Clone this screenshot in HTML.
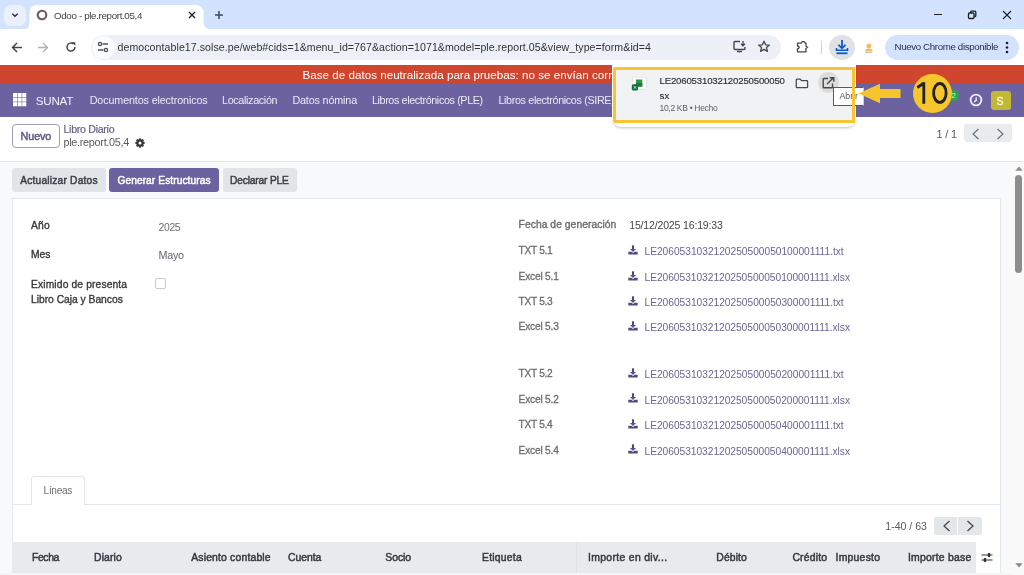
<!DOCTYPE html>
<html><head><meta charset="utf-8"><style>
html,body{margin:0;padding:0;width:1024px;height:575px;overflow:hidden;background:#fff;font-family:"Liberation Sans", sans-serif;}
body{filter:blur(0.35px);}
.t{position:absolute;white-space:pre;}
.r{position:absolute;}
</style></head><body>
<div class="r" style="left:0px;top:0px;width:1024px;height:29px;background:#d3e3fd"></div>
<div class="r" style="left:4px;top:4.5px;width:22px;height:21.5px;background:#eaf1fd;border-radius:7px"></div>
<svg class="r" style="left:10px;top:12px" width="10" height="7" viewBox="0 0 10 7"><path d="M2.3 1.8 L5 4.3 L7.7 1.8" stroke="#2a2f3a" stroke-width="1.5" fill="none"/></svg>
<svg class="r" style="left:21px;top:5px" width="192" height="25" viewBox="0 0 192 25"><path d="M0 25 Q8.5 25 8.5 17 L8.5 8 Q8.5 0 16.5 0 L174.5 0 Q182.5 0 182.5 8 L182.5 17 Q182.5 25 192 25 Z" fill="#ffffff"/></svg>
<svg class="r" style="left:35.7px;top:9px" width="12" height="12" viewBox="0 0 12 12"><circle cx="6" cy="6" r="4.3" stroke="#6b5862" stroke-width="2.1" fill="none"/></svg>
<div class="t" style="left:54px;top:10.60px;font-size:9.8px;line-height:9.8px;color:#3f3f3f;letter-spacing:-0.357px;">Odoo - ple.report.05,4</div>
<svg class="r" style="left:188px;top:11px" width="8" height="8" viewBox="0 0 8 8"><path d="M1 1L7 7M7 1L1 7" stroke="#1f1f1f" stroke-width="1.4"/></svg>
<svg class="r" style="left:214px;top:10px" width="10" height="10" viewBox="0 0 10 10"><path d="M5 1V9M1 5H9" stroke="#3c4a5c" stroke-width="1.5"/></svg>
<div class="r" style="left:934px;top:13.8px;width:7.5px;height:1.3px;background:#1f1f1f"></div>
<svg class="r" style="left:967px;top:10px" width="10" height="10" viewBox="0 0 10 10"><rect x="1.5" y="3" width="5.5" height="5.5" rx="1" stroke="#1f1f1f" stroke-width="1.3" fill="none"/><path d="M3.5 3V2.2Q3.5 1.2 4.5 1.2H7.8Q8.8 1.2 8.8 2.2V5.5Q8.8 6.5 7.8 6.5H7" stroke="#1f1f1f" stroke-width="1.3" fill="none"/></svg>
<svg class="r" style="left:1002px;top:10px" width="10" height="10" viewBox="0 0 10 10"><path d="M1 1L9 9M9 1L1 9" stroke="#1f1f1f" stroke-width="1.1"/></svg>
<div class="r" style="left:0px;top:29px;width:1024px;height:36px;background:#ffffff"></div>
<svg class="r" style="left:11px;top:42px" width="12" height="11" viewBox="0 0 12 11"><path d="M11 5.5H2M6 1L1.5 5.5L6 10" stroke="#474747" stroke-width="1.5" fill="none"/></svg>
<svg class="r" style="left:37px;top:42px" width="12" height="11" viewBox="0 0 12 11"><path d="M1 5.5H10M6 1L10.5 5.5L6 10" stroke="#b0b0b0" stroke-width="1.3" fill="none"/></svg>
<svg class="r" style="left:65px;top:41px" width="12" height="12" viewBox="0 0 12 12"><path d="M10 6A4 4 0 1 1 8.6 3" stroke="#474747" stroke-width="1.5" fill="none"/><path d="M6.8 1.3H10.3V4.8Z" fill="#474747"/></svg>
<div class="r" style="left:91px;top:34.5px;width:690px;height:25.8px;background:#edf1f7;border-radius:13px"></div>
<div class="r" style="left:92px;top:36px;width:23px;height:23px;background:#fafbfd;border-radius:12px"></div>
<svg class="r" style="left:97px;top:41px" width="12" height="12" viewBox="0 0 12 12"><circle cx="3" cy="3" r="1.6" stroke="#474747" stroke-width="1.2" fill="none"/><path d="M5.5 3H11" stroke="#474747" stroke-width="1.4"/><circle cx="9" cy="9" r="1.6" stroke="#474747" stroke-width="1.2" fill="none"/><path d="M1 9H6.5" stroke="#474747" stroke-width="1.4"/></svg>
<div class="t" style="left:117.5px;top:41.83px;font-size:10.6px;line-height:10.6px;color:#333333;letter-spacing:0.065px;">democontable17.solse.pe/web#cids=1&amp;menu_id=767&amp;action=1071&amp;model=ple.report.05&amp;view_type=form&amp;id=4</div>
<svg class="r" style="left:733px;top:40px" width="14" height="13" viewBox="0 0 14 13"><path d="M7 1.5H2Q1 1.5 1 2.5V8.5Q1 9.5 2 9.5H11Q12 9.5 12 8.5V7" stroke="#474747" stroke-width="1.4" fill="none"/><path d="M4 11.5H9" stroke="#474747" stroke-width="1.5"/><path d="M10 1V5.5M8 3.8L10 5.8L12 3.8" stroke="#474747" stroke-width="1.3" fill="none"/></svg>
<svg class="r" style="left:757px;top:40px" width="14" height="13" viewBox="0 0 14 13"><path d="M7 1.2L8.6 4.8L12.4 5.1L9.5 7.6L10.4 11.4L7 9.4L3.6 11.4L4.5 7.6L1.6 5.1L5.4 4.8Z" stroke="#474747" stroke-width="1.3" fill="none" stroke-linejoin="round"/></svg>
<svg class="r" style="left:795px;top:40px" width="14" height="14" viewBox="0 0 14 14"><path d="M2.5 3.2H6.2L7.2 1.6H9.2L10.2 3.2H11V6.3L12.6 7.3L11 8.3V11.8H2.5V8.6Q4.2 8.6 4.2 7.3Q4.2 6 2.5 6Z" stroke="#474747" stroke-width="1.3" fill="none" stroke-linejoin="round"/></svg>
<div class="r" style="left:821px;top:41px;width:1px;height:13px;background:#d0d4da"></div>
<div class="r" style="left:829px;top:35px;width:26px;height:25px;background:#dfe1e4;border-radius:13px"></div>
<svg class="r" style="left:835px;top:39px" width="14" height="17" viewBox="0 0 14 17"><path d="M7 1V9M3.5 5.8L7 9.3L10.5 5.8" stroke="#0b57d0" stroke-width="1.8" fill="none"/><path d="M1.5 9V11.3H12.5V9" stroke="#0b57d0" stroke-width="1.6" fill="none"/><path d="M1.5 14.3H12.5" stroke="#0b57d0" stroke-width="1.8"/></svg>
<svg class="r" style="left:864px;top:43px" width="10" height="10" viewBox="0 0 10 10"><circle cx="4.8" cy="3" r="2.4" fill="#f7b85e"/><path d="M1 8.2Q1 5.6 4.8 5.6Q8.6 5.6 8.6 8.2Z" fill="#f7b85e"/><path d="M1.2 9.4H8.4" stroke="#b9a88c" stroke-width="0.9"/></svg>
<div class="r" style="left:885px;top:35px;width:134px;height:25px;background:#d3e3fd;border-radius:13px"></div>
<div class="t" style="left:894.5px;top:41.79px;font-size:9.7px;line-height:9.7px;color:#1f2a44;letter-spacing:-0.346px;">Nuevo Chrome disponible</div>
<svg class="r" style="left:1005px;top:41px" width="4" height="13" viewBox="0 0 4 13"><circle cx="2" cy="2" r="1.3" fill="#1f1f1f"/><circle cx="2" cy="6.5" r="1.3" fill="#1f1f1f"/><circle cx="2" cy="11" r="1.3" fill="#1f1f1f"/></svg>
<div class="r" style="left:0px;top:65px;width:1024px;height:18.2px;background:#d0452e"></div>
<div class="t" style="left:302.5px;top:68.78px;font-size:11.6px;line-height:11.6px;color:#ffffff;letter-spacing:0.025px;">Base de datos neutralizada para pruebas: no se envían corr</div>
<div class="r" style="left:0px;top:83.2px;width:1024px;height:33.8px;background:#6d62a0"></div>
<svg class="r" style="left:13.2px;top:93.2px" width="15" height="15" viewBox="0 0 15 15"><rect x="0.0" y="0.0" width="4.05" height="4.05" fill="#ffffff"/><rect x="0.0" y="4.6" width="4.05" height="4.05" fill="#ffffff"/><rect x="0.0" y="9.2" width="4.05" height="4.05" fill="#ffffff"/><rect x="4.6" y="0.0" width="4.05" height="4.05" fill="#ffffff"/><rect x="4.6" y="4.6" width="4.05" height="4.05" fill="#ffffff"/><rect x="4.6" y="9.2" width="4.05" height="4.05" fill="#ffffff"/><rect x="9.2" y="0.0" width="4.05" height="4.05" fill="#ffffff"/><rect x="9.2" y="4.6" width="4.05" height="4.05" fill="#ffffff"/><rect x="9.2" y="9.2" width="4.05" height="4.05" fill="#ffffff"/></svg>
<div class="t" style="left:35.8px;top:95.08px;font-size:11.6px;line-height:11.6px;color:#f4f2fa;letter-spacing:-0.247px;">SUNAT</div>
<div class="t" style="left:89.7px;top:94.86px;font-size:10.8px;line-height:10.8px;color:#ebe8f5;letter-spacing:-0.149px;">Documentos electronicos</div>
<div class="t" style="left:222px;top:94.86px;font-size:10.8px;line-height:10.8px;color:#ebe8f5;letter-spacing:-0.352px;">Localización</div>
<div class="t" style="left:292.4px;top:94.86px;font-size:10.8px;line-height:10.8px;color:#ebe8f5;letter-spacing:-0.169px;">Datos nómina</div>
<div class="t" style="left:371.9px;top:94.86px;font-size:10.8px;line-height:10.8px;color:#ebe8f5;letter-spacing:-0.389px;">Libros electrónicos (PLE)</div>
<div class="t" style="left:498.4px;top:94.86px;font-size:10.8px;line-height:10.8px;color:#ebe8f5;letter-spacing:-0.362px;">Libros electrónicos (SIRE)</div>
<div class="r" style="left:0px;top:117px;width:1024px;height:44px;background:#ffffff"></div>
<div class="r" style="left:0px;top:161px;width:1024px;height:1px;background:#e2e5e9"></div>
<div class="r" style="left:12px;top:123.5px;width:48px;height:24.5px;background:#fff;border:1px solid #a29eb0;border-radius:4px;box-sizing:border-box"></div>
<div class="t" style="left:20.5px;top:131.16px;font-size:10.8px;line-height:10.8px;color:#5d5a80;-webkit-text-stroke:0.46px #5d5a80;letter-spacing:-0.084px;">Nuevo</div>
<div class="t" style="left:63.5px;top:124.43px;font-size:10.6px;line-height:10.6px;color:#66628a;-webkit-text-stroke:0.20px #66628a;letter-spacing:-0.281px;">Libro Diario</div>
<div class="t" style="left:63.5px;top:136.96px;font-size:10.8px;line-height:10.8px;color:#5a5a5a;letter-spacing:-0.276px;">ple.report.05,4</div>
<svg class="r" style="left:135.2px;top:137.5px" width="10" height="10" viewBox="0 0 10 10"><g fill="#3a3a3a"><circle cx="5" cy="5" r="3.7"/><rect x="4" y="0.3" width="2" height="9.4" rx="0.4" transform="rotate(0 5 5)"/><rect x="4" y="0.3" width="2" height="9.4" rx="0.4" transform="rotate(45 5 5)"/><rect x="4" y="0.3" width="2" height="9.4" rx="0.4" transform="rotate(90 5 5)"/><rect x="4" y="0.3" width="2" height="9.4" rx="0.4" transform="rotate(135 5 5)"/></g><circle cx="5" cy="5" r="1.5" fill="#fff"/></svg>
<div class="t" style="left:936.4px;top:129.36px;font-size:10.8px;line-height:10.8px;color:#555555;letter-spacing:-0.123px;">1 / 1</div>
<div class="r" style="left:964px;top:124.4px;width:47.6px;height:18px;background:#e9ecef;border-radius:3px"></div>
<svg class="r" style="left:971px;top:127.5px" width="9" height="12" viewBox="0 0 9 12"><path d="M7.5 1L2 6L7.5 11" stroke="#707070" stroke-width="1.2" fill="none"/></svg>
<svg class="r" style="left:995.5px;top:127.5px" width="9" height="12" viewBox="0 0 9 12"><path d="M1.5 1L7 6L1.5 11" stroke="#707070" stroke-width="1.2" fill="none"/></svg>
<div class="r" style="left:0px;top:162px;width:1012px;height:413px;background:#f8f9fa"></div>
<div class="r" style="left:1012px;top:162px;width:12px;height:413px;background:#f9f9f9"></div>
<svg class="r" style="left:1014.5px;top:165.5px" width="8" height="5" viewBox="0 0 8 5"><path d="M0.3 4.7L4 0.5L7.7 4.7Z" fill="#8a8a8a"/></svg>
<div class="r" style="left:1015px;top:175px;width:7px;height:98px;background:#8d8d8d;border-radius:3.5px"></div>
<svg class="r" style="left:1014.5px;top:563px" width="8" height="5" viewBox="0 0 8 5"><path d="M0.3 0.3L4 4.5L7.7 0.3Z" fill="#8a8a8a"/></svg>
<div class="r" style="left:12px;top:168.3px;width:93.5px;height:23.8px;background:#e2e5e8;border-radius:3px"></div>
<div class="t" style="left:20.3px;top:175.57px;font-size:10.2px;line-height:10.2px;color:#3b3f46;-webkit-text-stroke:0.46px #3b3f46;letter-spacing:0.201px;">Actualizar Datos</div>
<div class="r" style="left:108.6px;top:168.3px;width:110.5px;height:23.8px;background:#6d62a0;border-radius:3px"></div>
<div class="t" style="left:117.4px;top:175.57px;font-size:10.2px;line-height:10.2px;color:#ffffff;-webkit-text-stroke:0.46px #ffffff;letter-spacing:0.082px;">Generar Estructuras</div>
<div class="r" style="left:222.6px;top:168.3px;width:74.7px;height:23.8px;background:#e2e5e8;border-radius:3px"></div>
<div class="t" style="left:230px;top:175.57px;font-size:10.2px;line-height:10.2px;color:#3b3f46;-webkit-text-stroke:0.46px #3b3f46;letter-spacing:-0.158px;">Declarar PLE</div>
<div class="r" style="left:12px;top:197.7px;width:989px;height:400px;background:#ffffff;border:1px solid #e5e7eb;box-sizing:border-box"></div>
<div class="t" style="left:31px;top:220.58px;font-size:10.3px;line-height:10.3px;color:#383838;-webkit-text-stroke:0.34px #383838;letter-spacing:0.224px;">Año</div>
<div class="t" style="left:158.5px;top:222.90px;font-size:10.4px;line-height:10.4px;color:#6e6e6e;letter-spacing:-0.331px;">2025</div>
<div class="t" style="left:31px;top:250.08px;font-size:10.3px;line-height:10.3px;color:#383838;-webkit-text-stroke:0.34px #383838;letter-spacing:-0.084px;">Mes</div>
<div class="t" style="left:158.5px;top:250.16px;font-size:10.8px;line-height:10.8px;color:#636770;letter-spacing:-0.277px;">Mayo</div>
<div class="t" style="left:31px;top:280.18px;font-size:10.3px;line-height:10.3px;color:#383838;-webkit-text-stroke:0.34px #383838;letter-spacing:0.122px;">Eximido de presenta</div>
<div class="t" style="left:31px;top:295.18px;font-size:10.3px;line-height:10.3px;color:#383838;-webkit-text-stroke:0.34px #383838;letter-spacing:-0.019px;">Libro Caja y Bancos</div>
<div class="r" style="left:155px;top:278.2px;width:10.5px;height:10.5px;background:#fff;border:1px solid #c9c9c9;border-radius:2px;box-sizing:border-box"></div>
<div class="t" style="left:518.6px;top:220.48px;font-size:10.3px;line-height:10.3px;color:#6a6a6a;-webkit-text-stroke:0.34px #6a6a6a;letter-spacing:0.050px;">Fecha de generación</div>
<div class="t" style="left:629.2px;top:220.41px;font-size:10.5px;line-height:10.5px;color:#454545;letter-spacing:-0.150px;">15/12/2025 16:19:33</div>
<div class="t" style="left:518.6px;top:246.47px;font-size:10.2px;line-height:10.2px;color:#6b6b6b;-webkit-text-stroke:0.27px #6b6b6b;letter-spacing:-0.309px;">TXT 5.1</div>
<svg class="r" style="left:628.4px;top:245.0px" width="10" height="10" viewBox="0 0 10 10"><path d="M5 0.3V5" stroke="#4f4870" stroke-width="2.1"/><path d="M1.9 3.9L5 6.9L8.1 3.9Z" fill="#5a5290"/><path d="M0.3 6.7H3.4L5 8.1L6.6 6.7H9.7V9.4H0.3Z" fill="#514a7c"/></svg>
<div class="t" style="left:644.5px;top:247.27px;font-size:10.2px;line-height:10.2px;color:#6a6690;letter-spacing:-0.006px;">LE2060531032120250500050100001111.txt</div>
<div class="t" style="left:518.6px;top:271.97px;font-size:10.2px;line-height:10.2px;color:#6b6b6b;-webkit-text-stroke:0.27px #6b6b6b;letter-spacing:-0.212px;">Excel 5.1</div>
<svg class="r" style="left:628.4px;top:270.5px" width="10" height="10" viewBox="0 0 10 10"><path d="M5 0.3V5" stroke="#4f4870" stroke-width="2.1"/><path d="M1.9 3.9L5 6.9L8.1 3.9Z" fill="#5a5290"/><path d="M0.3 6.7H3.4L5 8.1L6.6 6.7H9.7V9.4H0.3Z" fill="#514a7c"/></svg>
<div class="t" style="left:644.5px;top:272.77px;font-size:10.2px;line-height:10.2px;color:#6a6690;letter-spacing:-0.019px;">LE2060531032120250500050100001111.xlsx</div>
<div class="t" style="left:518.6px;top:296.97px;font-size:10.2px;line-height:10.2px;color:#6b6b6b;-webkit-text-stroke:0.27px #6b6b6b;letter-spacing:-0.309px;">TXT 5.3</div>
<svg class="r" style="left:628.4px;top:295.5px" width="10" height="10" viewBox="0 0 10 10"><path d="M5 0.3V5" stroke="#4f4870" stroke-width="2.1"/><path d="M1.9 3.9L5 6.9L8.1 3.9Z" fill="#5a5290"/><path d="M0.3 6.7H3.4L5 8.1L6.6 6.7H9.7V9.4H0.3Z" fill="#514a7c"/></svg>
<div class="t" style="left:644.5px;top:297.77px;font-size:10.2px;line-height:10.2px;color:#6a6690;letter-spacing:-0.006px;">LE2060531032120250500050300001111.txt</div>
<div class="t" style="left:518.6px;top:322.27px;font-size:10.2px;line-height:10.2px;color:#6b6b6b;-webkit-text-stroke:0.27px #6b6b6b;letter-spacing:-0.212px;">Excel 5.3</div>
<svg class="r" style="left:628.4px;top:320.8px" width="10" height="10" viewBox="0 0 10 10"><path d="M5 0.3V5" stroke="#4f4870" stroke-width="2.1"/><path d="M1.9 3.9L5 6.9L8.1 3.9Z" fill="#5a5290"/><path d="M0.3 6.7H3.4L5 8.1L6.6 6.7H9.7V9.4H0.3Z" fill="#514a7c"/></svg>
<div class="t" style="left:644.5px;top:323.07px;font-size:10.2px;line-height:10.2px;color:#6a6690;letter-spacing:-0.019px;">LE2060531032120250500050300001111.xlsx</div>
<div class="t" style="left:518.6px;top:369.27px;font-size:10.2px;line-height:10.2px;color:#6b6b6b;-webkit-text-stroke:0.27px #6b6b6b;letter-spacing:-0.309px;">TXT 5.2</div>
<svg class="r" style="left:628.4px;top:367.8px" width="10" height="10" viewBox="0 0 10 10"><path d="M5 0.3V5" stroke="#4f4870" stroke-width="2.1"/><path d="M1.9 3.9L5 6.9L8.1 3.9Z" fill="#5a5290"/><path d="M0.3 6.7H3.4L5 8.1L6.6 6.7H9.7V9.4H0.3Z" fill="#514a7c"/></svg>
<div class="t" style="left:644.5px;top:370.07px;font-size:10.2px;line-height:10.2px;color:#6a6690;letter-spacing:-0.006px;">LE2060531032120250500050200001111.txt</div>
<div class="t" style="left:518.6px;top:394.87px;font-size:10.2px;line-height:10.2px;color:#6b6b6b;-webkit-text-stroke:0.27px #6b6b6b;letter-spacing:-0.212px;">Excel 5.2</div>
<svg class="r" style="left:628.4px;top:393.4px" width="10" height="10" viewBox="0 0 10 10"><path d="M5 0.3V5" stroke="#4f4870" stroke-width="2.1"/><path d="M1.9 3.9L5 6.9L8.1 3.9Z" fill="#5a5290"/><path d="M0.3 6.7H3.4L5 8.1L6.6 6.7H9.7V9.4H0.3Z" fill="#514a7c"/></svg>
<div class="t" style="left:644.5px;top:395.67px;font-size:10.2px;line-height:10.2px;color:#6a6690;letter-spacing:-0.019px;">LE2060531032120250500050200001111.xlsx</div>
<div class="t" style="left:518.6px;top:420.47px;font-size:10.2px;line-height:10.2px;color:#6b6b6b;-webkit-text-stroke:0.27px #6b6b6b;letter-spacing:-0.309px;">TXT 5.4</div>
<svg class="r" style="left:628.4px;top:419.0px" width="10" height="10" viewBox="0 0 10 10"><path d="M5 0.3V5" stroke="#4f4870" stroke-width="2.1"/><path d="M1.9 3.9L5 6.9L8.1 3.9Z" fill="#5a5290"/><path d="M0.3 6.7H3.4L5 8.1L6.6 6.7H9.7V9.4H0.3Z" fill="#514a7c"/></svg>
<div class="t" style="left:644.5px;top:421.27px;font-size:10.2px;line-height:10.2px;color:#6a6690;letter-spacing:-0.006px;">LE2060531032120250500050400001111.txt</div>
<div class="t" style="left:518.6px;top:445.87px;font-size:10.2px;line-height:10.2px;color:#6b6b6b;-webkit-text-stroke:0.27px #6b6b6b;letter-spacing:-0.212px;">Excel 5.4</div>
<svg class="r" style="left:628.4px;top:444.4px" width="10" height="10" viewBox="0 0 10 10"><path d="M5 0.3V5" stroke="#4f4870" stroke-width="2.1"/><path d="M1.9 3.9L5 6.9L8.1 3.9Z" fill="#5a5290"/><path d="M0.3 6.7H3.4L5 8.1L6.6 6.7H9.7V9.4H0.3Z" fill="#514a7c"/></svg>
<div class="t" style="left:644.5px;top:446.67px;font-size:10.2px;line-height:10.2px;color:#6a6690;letter-spacing:-0.019px;">LE2060531032120250500050400001111.xlsx</div>
<div class="r" style="left:12px;top:504px;width:989px;height:1px;background:#e3e6ea"></div>
<div class="r" style="left:30.5px;top:475.5px;width:54px;height:29.5px;background:#fff;border:1px solid #e3e6ea;border-bottom:none;border-radius:3px 3px 0 0;box-sizing:border-box"></div>
<div class="t" style="left:43.6px;top:485.75px;font-size:10.1px;line-height:10.1px;color:#6e6e6e;letter-spacing:-0.319px;">Líneas</div>
<div class="t" style="left:885.3px;top:520.83px;font-size:10.6px;line-height:10.6px;color:#5a5a5a;letter-spacing:-0.014px;">1-40 / 63</div>
<div class="r" style="left:933.5px;top:516.8px;width:23.5px;height:18.2px;background:#e4e7ea;border-radius:3px 0 0 3px"></div>
<div class="r" style="left:958px;top:516.8px;width:23.5px;height:18.2px;background:#e4e7ea;border-radius:0 3px 3px 0"></div>
<svg class="r" style="left:941.5px;top:520px" width="9" height="12" viewBox="0 0 9 12"><path d="M7.5 1L2 6L7.5 11" stroke="#404040" stroke-width="1.2" fill="none"/></svg>
<svg class="r" style="left:965.5px;top:520px" width="9" height="12" viewBox="0 0 9 12"><path d="M1.5 1L7 6L1.5 11" stroke="#404040" stroke-width="1.2" fill="none"/></svg>
<div class="r" style="left:12px;top:541.6px;width:964px;height:31.8px;background:#e9eaed"></div>
<div class="t" style="left:32px;top:552.50px;font-size:10.4px;line-height:10.4px;color:#353a42;-webkit-text-stroke:0.48px #353a42;letter-spacing:-0.378px;">Fecha</div>
<div class="t" style="left:94px;top:552.50px;font-size:10.4px;line-height:10.4px;color:#353a42;-webkit-text-stroke:0.48px #353a42;letter-spacing:0.143px;">Diario</div>
<div class="t" style="left:191.2px;top:552.50px;font-size:10.4px;line-height:10.4px;color:#353a42;-webkit-text-stroke:0.48px #353a42;letter-spacing:0.172px;">Asiento contable</div>
<div class="t" style="left:287.9px;top:552.50px;font-size:10.4px;line-height:10.4px;color:#353a42;-webkit-text-stroke:0.48px #353a42;letter-spacing:-0.003px;">Cuenta</div>
<div class="t" style="left:385.3px;top:552.50px;font-size:10.4px;line-height:10.4px;color:#353a42;-webkit-text-stroke:0.48px #353a42;letter-spacing:-0.060px;">Socio</div>
<div class="t" style="left:482px;top:552.50px;font-size:10.4px;line-height:10.4px;color:#353a42;-webkit-text-stroke:0.48px #353a42;letter-spacing:0.232px;">Etiqueta</div>
<div class="t" style="left:588px;top:552.50px;font-size:10.4px;line-height:10.4px;color:#353a42;-webkit-text-stroke:0.48px #353a42;letter-spacing:0.333px;">Importe en div...</div>
<div class="t" style="left:716.3px;top:552.50px;font-size:10.4px;line-height:10.4px;color:#353a42;-webkit-text-stroke:0.48px #353a42;letter-spacing:0.109px;">Débito</div>
<div class="t" style="left:792.4px;top:552.50px;font-size:10.4px;line-height:10.4px;color:#353a42;-webkit-text-stroke:0.48px #353a42;letter-spacing:0.200px;">Crédito</div>
<div class="t" style="left:835.5px;top:552.50px;font-size:10.4px;line-height:10.4px;color:#353a42;-webkit-text-stroke:0.48px #353a42;letter-spacing:0.256px;">Impuesto</div>
<div class="t" style="left:908px;top:552.50px;font-size:10.4px;line-height:10.4px;color:#353a42;-webkit-text-stroke:0.48px #353a42;letter-spacing:0.229px;">Importe base</div>
<div class="r" style="left:575.5px;top:541.6px;width:1px;height:31.8px;background:#dfe1e5"></div>
<svg class="r" style="left:981px;top:552px" width="12" height="11" viewBox="0 0 12 11"><path d="M0.5 3H11.5M0.5 8H11.5" stroke="#333" stroke-width="1.2"/><rect x="6.8" y="1" width="2.4" height="4" rx="0.5" fill="#333"/><rect x="2.8" y="6" width="2.4" height="4" rx="0.5" fill="#333"/></svg>
<div class="r" style="left:0px;top:573.4px;width:1012px;height:1.6px;background:#f4f5f6"></div>
<div class="r" style="left:612px;top:62px;width:243.5px;height:64.5px;background:#ffffff;border-radius:0 0 9px 9px;box-shadow:0 2px 3px -1px rgba(0,0,0,0.25)"></div>
<div class="r" style="left:613px;top:66.5px;width:242px;height:56.5px;background:#f1f2f3;border:3px solid #f6c530;box-sizing:border-box;border-radius:2px"></div>
<svg class="r" style="left:630px;top:75px" width="20" height="18" viewBox="630 75 20 18"><rect x="632.6" y="77.2" width="14" height="12.2" rx="1" fill="#ffffff" stroke="#d9dcdf" stroke-width="0.7"/><rect x="636" y="79.5" width="6.3" height="7.1" fill="#2e9a45"/><rect x="636" y="83" width="6.3" height="3.6" fill="#1f7a35"/><rect x="631.8" y="84.3" width="6.3" height="6.2" rx="1.6" fill="#176b45"/><path d="M633.8 86.2L636.1 88.6M636.1 86.2L633.8 88.6" stroke="#bfe3cf" stroke-width="1"/></svg>
<div class="t" style="left:659.5px;top:75.77px;font-size:9.6px;line-height:9.6px;color:#303030;-webkit-text-stroke:0.16px #303030;letter-spacing:-0.159px;">LE2060531032120250500050</div>
<div class="t" style="left:659.5px;top:90.67px;font-size:9.6px;line-height:9.6px;color:#303030;-webkit-text-stroke:0.16px #303030;letter-spacing:0.203px;">sx</div>
<div class="t" style="left:659.5px;top:104.30px;font-size:8.5px;line-height:8.5px;color:#606060;letter-spacing:-0.308px;">10,2 KB • Hecho</div>
<svg class="r" style="left:794.5px;top:78px" width="14" height="11" viewBox="0 0 14 11"><path d="M1.3 2Q1.3 1.2 2.1 1.2H5.2L6.6 2.6H11.8Q12.6 2.6 12.6 3.4V8.9Q12.6 9.6 11.8 9.6H2.1Q1.3 9.6 1.3 8.9Z" stroke="#4a4a4a" stroke-width="1.3" fill="none"/></svg>
<div class="r" style="left:818px;top:72px;width:21px;height:21px;background:#dcdcdc;border-radius:11px"></div>
<svg class="r" style="left:822px;top:77px" width="13" height="12" viewBox="0 0 13 12"><path d="M6 1.5H2Q1.2 1.5 1.2 2.3V10Q1.2 10.8 2 10.8H9.7Q10.5 10.8 10.5 10V6.5" stroke="#474747" stroke-width="1.4" fill="none"/><path d="M5 7L11.5 0.8M7.8 0.8H11.8V4.8" stroke="#474747" stroke-width="1.4" fill="none"/></svg>
<div class="r" style="left:833.3px;top:87.2px;width:31px;height:19px;background:#ffffff;border:1px solid #5a5a5a;border-right-color:#cfcfcf;box-sizing:border-box"></div>
<div class="t" style="left:839.4px;top:92.35px;font-size:8.8px;line-height:8.8px;color:#5a5a5a;">Abrir</div>
<div class="r" style="left:851.7px;top:66.5px;width:3.3px;height:56.5px;background:#f6c530"></div>
<svg class="r" style="left:857px;top:83px" width="45" height="21" viewBox="0 0 45 21"><path d="M1.5 10.5L23 0.8V6H43.5V15H23V20.2Z" fill="#f7c52b"/></svg>
<div class="r" style="left:948px;top:90px;width:10.5px;height:10.5px;background:#27a64a;border-radius:5.5px"></div>
<div class="t" style="left:951.5px;top:91.83px;font-size:8px;line-height:8px;color:#d8f0dc;">2</div>
<svg class="r" style="left:968.5px;top:92.5px" width="14" height="14" viewBox="0 0 14 14"><circle cx="7" cy="7" r="5.4" stroke="#f1edff" stroke-width="1.8" fill="none"/><path d="M7.2 4.3V7.4L5.2 9" stroke="#f1edff" stroke-width="1.4" fill="none"/></svg>
<div class="r" style="left:991px;top:90.8px;width:19.6px;height:19.4px;background:#c1b833;border-radius:3px"></div>
<div class="t" style="left:996.4px;top:96.11px;font-size:10.5px;line-height:10.5px;color:#fbf8dc;-webkit-text-stroke:0.34px #fbf8dc;">S</div>
<div class="r" style="left:913px;top:73.5px;width:39px;height:39px;background:#f7c62d;border-radius:50%"></div>
<svg class="r" style="left:913px;top:78px" width="40" height="30" viewBox="913 78 40 30"><path d="M923.8 82.3V103.8M923.8 83L917.3 87.5" stroke="#222" stroke-width="2.8" fill="none"/><ellipse cx="939.85" cy="92.95" rx="6.25" ry="9.45" stroke="#222" stroke-width="2.8" fill="none"/></svg>
</body></html>
